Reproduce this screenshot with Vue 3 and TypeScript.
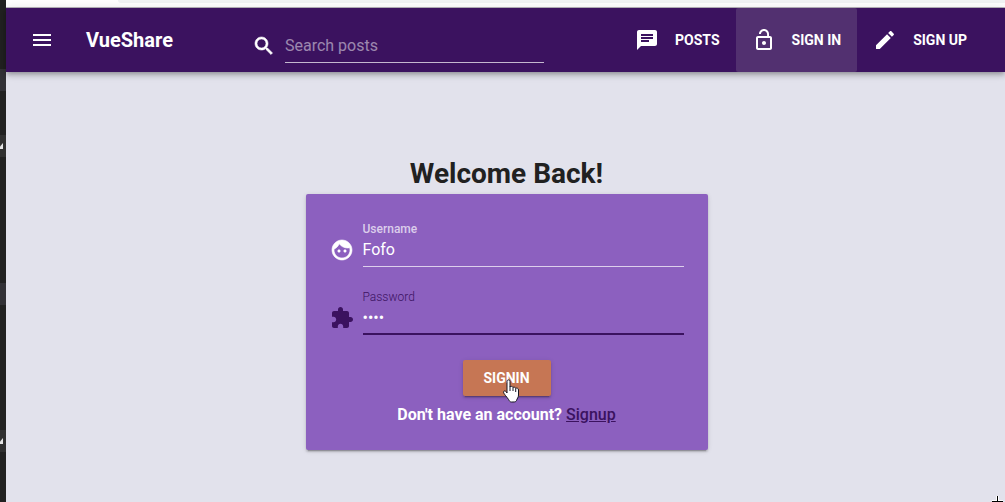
<script setup lang="ts">
import { ref } from 'vue'

interface NavItem {
  title: string
  path: string
  active: boolean
}

const navItems: NavItem[] = [
  {
    title: 'Posts',
    path: 'M20 2H4c-1.1 0-1.99.9-1.99 2L2 22l4-4h14c1.1 0 2-.9 2-2V4c0-1.1-.9-2-2-2zM6 9h12v2H6V9zm8 5H6v-2h8v2zm4-6H6V6h12v2z',
    active: false,
  },
  {
    title: 'Sign In',
    path: 'M12 17c1.1 0 2-.9 2-2s-.9-2-2-2-2 .9-2 2 .9 2 2 2zm6-9h-1V6c0-2.76-2.24-5-5-5S7 3.24 7 6h1.9c0-1.71 1.39-3.1 3.1-3.1 1.71 0 3.1 1.39 3.1 3.1v2H6c-1.1 0-2 .9-2 2v10c0 1.1.9 2 2 2h12c1.1 0 2-.9 2-2V10c0-1.1-.9-2-2-2zm0 12H6V10h12v10z',
    active: true,
  },
  {
    title: 'Sign Up',
    path: 'M3 17.25V21h3.75L17.81 9.94l-3.75-3.75L3 17.25zM20.71 7.04c.39-.39.39-1.02 0-1.41l-2.34-2.34c-.39-.39-1.02-.39-1.41 0l-1.83 1.83 3.75 3.75 1.83-1.83z',
    active: false,
  },
]

const search = ref('')
const username = ref('Fofo')
const password = ref('fofo')
</script>

<template>
  <div class="screen">
    <div class="editor-edge" aria-hidden="true">
      <i class="edge-row edge-row-a"></i>
      <i class="edge-row edge-row-b"><b></b></i>
      <i class="edge-row edge-row-c"></i>
      <i class="edge-row edge-row-d"><b></b></i>
    </div>
    <div class="page">
      <div class="browser-edge"><div class="address-edge"></div></div>
      <header class="toolbar">
        <button class="menu-button" type="button" aria-label="Menu">
          <svg class="icon" viewBox="0 0 24 24"><path d="M3 18h18v-2H3v2zm0-5h18v-2H3v2zm0-7v2h18V6H3z" /></svg>
        </button>
        <a class="brand" href="#">VueShare</a>
        <div class="search">
          <label for="search" aria-label="Search posts">
            <svg class="icon heavy" viewBox="0 0 24 24"><path d="M15.5 14h-.79l-.28-.27C15.41 12.59 16 11.11 16 9.5 16 5.91 13.09 3 9.5 3S3 5.91 3 9.5 5.91 16 9.5 16c1.61 0 3.09-.59 4.23-1.57l.27.28v.79l5 4.99L20.49 19l-4.99-5zm-6 0C7.01 14 5 11.99 5 9.5S7.01 5 9.5 5 14 7.01 14 9.5 11.99 14 9.5 14z" /></svg>
          </label>
          <input id="search" v-model="search" type="text" placeholder="Search posts" />
        </div>
        <nav class="nav">
          <a v-for="item in navItems" :key="item.title" href="#" class="nav-link" :class="{ active: item.active }">
            <svg class="icon" viewBox="0 0 24 24"><path :d="item.path" /></svg>
            <span>{{ item.title }}</span>
          </a>
        </nav>
      </header>
      <main class="content">
        <h1>Welcome Back!</h1>
        <form class="card" @submit.prevent>
          <div class="field">
            <svg class="icon heavy" viewBox="0 0 24 24"><path d="M9 11.75c-.69 0-1.25.56-1.25 1.25s.56 1.25 1.25 1.25 1.25-.56 1.25-1.25-.56-1.25-1.25-1.25zm6 0c-.69 0-1.25.56-1.25 1.25s.56 1.25 1.25 1.25 1.25-.56 1.25-1.25-.56-1.25-1.25-1.25zM12 2C6.48 2 2 6.48 2 12s4.48 10 10 10 10-4.480 10-10S17.520 2 12 2zm0 18c-4.410 0-8-3.590-8-8 0-.29.020-.58.050-.86 2.360-1.050 4.230-2.980 5.210-5.370C11.070 8.330 14.050 10 17.420 10c.78 0 1.530-.09 2.250-.26.210.71.330 1.470.330 2.260 0 4.410-3.590 8-8 8z" /></svg>
            <div class="control">
              <label for="username">Username</label>
              <input id="username" v-model="username" type="text" />
            </div>
          </div>
          <div class="field focused">
            <svg class="icon" viewBox="0 0 24 24"><path d="M20.500 11H19V7c0-1.100-.9-2-2-2h-4V3.500C13 2.120 11.880 1 10.500 1S8 2.120 8 3.500V5H4c-1.100 0-1.990.9-1.990 2v3.800H3.500c1.490 0 2.700 1.210 2.700 2.700s-1.210 2.700-2.700 2.700H2V20c0 1.100.9 2 2 2h3.800v-1.500c0-1.490 1.210-2.700 2.700-2.700 1.490 0 2.700 1.210 2.700 2.700V22H17c1.100 0 2-.9 2-2v-4h1.500c1.380 0 2.500-1.120 2.500-2.500S21.880 11 20.500 11z" /></svg>
            <div class="control">
              <label for="password">Password</label>
              <input id="password" v-model="password" type="password" />
            </div>
          </div>
          <div class="action">
            <button class="submit" type="submit">Signin</button>
            <svg class="pointer" viewBox="0 0 18 24" aria-hidden="true">
              <path d="M5 14V2.500C5 .3 8 .3 8 2.500V8c.4-1 2.700-.8 3 .5.600-.7 2.500-.4 2.700.9.900-.7 2.800-.2 2.800 1.600v5c0 2.600-1.500 3.500-1.900 5.300-.5 1.500-1.600 1.700-3.600 1.700H9.500c-1.700 0-2.100-1.100-3-2.600-1-1.700-2.200-2.600-3.200-4.100-.8-1.300-2.500-2.800-1.500-4C2.800 11.200 4.300 12.600 5 14z" />
              <path d="M8 7.500V12M11 8.500V12M13.700 9.500V13" />
            </svg>
          </div>
          <p class="prompt">Don't have an account? <a href="#">Signup</a></p>
        </form>
      </main>
      <svg class="crosshair" viewBox="0 0 11 6" aria-hidden="true">
        <path class="halo" d="M4 0h3v4h4v2H0V4h4z" />
        <path d="M5 0h1v5h5v1H0V5h5z" />
      </svg>
    </div>
  </div>
</template>

<style>
body {
  margin: 0;
}
</style>

<style scoped>
.screen,
.screen * {
  box-sizing: border-box;
}

.screen {
  position: relative;
  display: flex;
  min-height: 100vh;
  overflow: hidden;
  font-family: Roboto, "Liberation Sans", sans-serif;
  font-size: 16px;
  color: #fff;
}

.editor-edge {
  display: flex;
  flex: none;
  flex-direction: column;
  width: 6px;
  padding-top: 69px;
  background: #212121;
}

.edge-row {
  display: flex;
  align-items: center;
  height: 22px;
  background: #323136;
}

.edge-row b {
  width: 3px;
  height: 6px;
  background: #e4e4e4;
  clip-path: polygon(0 60%, 100% 0, 100% 100%, 0 100%);
}

.edge-row-b {
  margin-top: 44px;
  background: #303030;
}

.edge-row-c {
  margin-top: 126px;
}

.edge-row-d {
  margin-top: 125px;
  background: #303030;
}

.page {
  display: flex;
  flex: 1;
  flex-direction: column;
  min-width: 0;
  background: #e2e2ec;
}

.browser-edge {
  height: 8px;
  padding-left: 112px;
  background: #fff;
  border-bottom: 1px solid #b9b6bd;
}

.address-edge {
  height: 3px;
  background: #f1f3f4;
  border-bottom-left-radius: 8px;
}

.toolbar {
  display: flex;
  align-items: center;
  height: 64px;
  padding: 0 22px 0 24px;
  background: #3b125f;
  box-shadow: 0 2px 4px -1px rgba(0, 0, 0, 0.2), 0 4px 5px rgba(0, 0, 0, 0.14), 0 1px 10px rgba(0, 0, 0, 0.12);
}

.icon {
  display: block;
  flex: none;
  width: 24px;
  height: 24px;
  fill: currentColor;
}

.heavy {
  stroke: currentColor;
  stroke-width: 0.6;
}

.menu-button {
  padding: 0;
  color: inherit;
  background: none;
  border: 0;
}

.brand {
  width: 166px;
  margin-left: 32px;
  font-size: 20px;
  font-weight: 700;
  line-height: 24px;
  color: inherit;
  text-decoration: none;
}

.search {
  display: flex;
  flex: 1;
  gap: 9px;
  align-items: center;
  max-width: 292px;
  margin-top: 12px;
}

input {
  width: 100%;
  min-width: 0;
  padding: 0;
  font: inherit;
  color: #fff;
  background: none;
  border: 0;
  border-bottom: 1px solid rgba(255, 255, 255, 0.7);
  border-radius: 0;
  outline: none;
}

.search input {
  height: 34px;
}

.search input::placeholder {
  color: rgba(255, 255, 255, 0.5);
  opacity: 1;
}

.nav {
  display: flex;
  align-self: stretch;
  margin-left: auto;
}

.nav-link {
  display: flex;
  gap: 16px;
  align-items: center;
  padding: 0 16px;
  font-size: 14px;
  font-weight: 700;
  color: inherit;
  text-decoration: none;
  text-transform: uppercase;
  white-space: nowrap;
}

.nav-link.active {
  background: #523070;
  border-radius: 2px;
}

.content {
  display: flex;
  flex: 1;
  flex-direction: column;
  align-items: center;
  padding: 84px 24px 24px 26px;
}

h1 {
  margin: 0 0 2px;
  font-size: 28px;
  font-weight: 700;
  line-height: 36px;
  color: #212121;
}

.card {
  width: 100%;
  max-width: 402px;
  padding: 26px 24px 24px;
  background: #8c60bf;
  border-radius: 2px;
  box-shadow: 0 3px 1px -2px rgba(0, 0, 0, 0.2), 0 2px 2px rgba(0, 0, 0, 0.14), 0 1px 5px rgba(0, 0, 0, 0.12);
}

.field {
  display: flex;
  gap: 9px;
  align-items: center;
  height: 60px;
  margin-bottom: 8px;
}

.control {
  flex: 1;
  padding-bottom: 12px;
}

.control label {
  display: block;
  font-size: 12px;
  font-weight: 500;
  line-height: 16px;
  color: rgba(255, 255, 255, 0.7);
}

.control input {
  display: block;
  height: 30px;
  padding-bottom: 4px;
}

.focused,
.focused label {
  color: #3b125f;
}

.focused label {
  font-weight: 300;
}

.focused input {
  border-bottom: 2px solid #3b125f;
}

.action {
  position: relative;
  display: flex;
  justify-content: center;
  margin-top: 12px;
}

.submit {
  min-width: 88px;
  height: 36px;
  padding: 0 16px;
  font: inherit;
  font-size: 14px;
  font-weight: 700;
  color: #fff;
  text-transform: uppercase;
  background: #c67654;
  border: 0;
  border-radius: 2px;
  box-shadow: 0 3px 1px -2px rgba(0, 0, 0, 0.2), 0 2px 2px rgba(0, 0, 0, 0.14), 0 1px 5px rgba(0, 0, 0, 0.12);
}

.pointer {
  position: absolute;
  top: 19px;
  left: 50%;
  width: 18px;
  height: 24px;
  margin-left: -5px;
  fill: #fff;
  stroke: #161622;
  stroke-width: 1;
}

.prompt {
  margin: 8px 0 0;
  font-weight: 700;
  line-height: 22px;
  text-align: center;
}

.prompt a {
  font-weight: 500;
  color: #3b125f;
}

.crosshair {
  position: absolute;
  right: 2px;
  bottom: 0;
  width: 11px;
  height: 6px;
}

.crosshair .halo {
  fill: #fff;
}
</style>
